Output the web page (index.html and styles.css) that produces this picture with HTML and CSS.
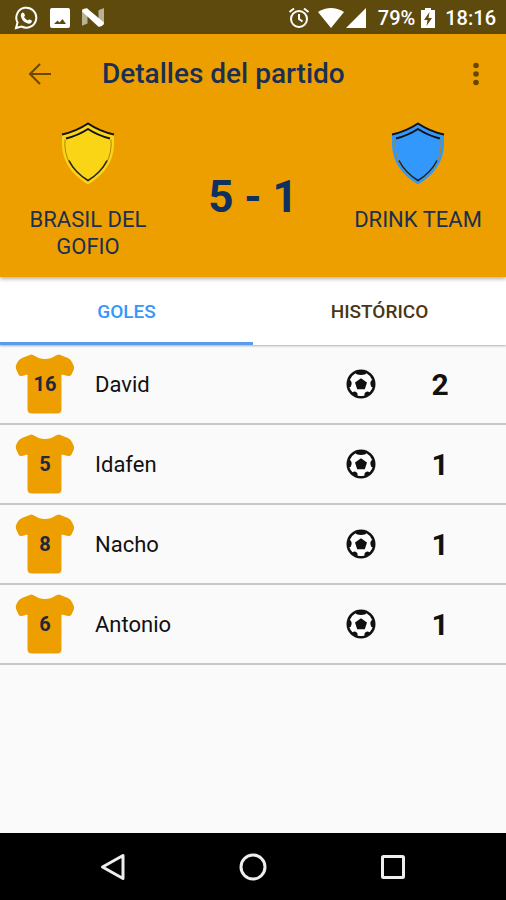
FILE: index.html
```html
<!DOCTYPE html>
<html lang="es">
<head>
<meta charset="utf-8">
<meta name="viewport" content="width=device-width, initial-scale=1">
<title>Detalles del partido</title>
<link rel="stylesheet" href="styles.css">
</head>
<body>
<svg class="defs" aria-hidden="true">
  <symbol id="shirt" viewBox="0 0 60 60">
    <path d="M16 .5 Q18 .5 20 2 Q24 5 30 5 Q36 5 40 2 Q42 .5 44 .5 L53 4 Q56 5.500 57.500 9 Q59.500 13 59 15 L56.500 20.500 Q55.500 22.500 53 22 L46.500 20.500 V55 Q46.500 59.500 42 59.500 H17 Q12.500 59.500 12.500 55 V20.500 L7 22 Q4.500 22.500 3.500 20.500 L1 15 Q0 12 2 9 Q3.500 5.500 7 4 Z"/>
  </symbol>
  <symbol id="ball" viewBox="0 0 30 30">
    <circle cx="15" cy="15" r="14.500"/>
    <path class="ball-white" d="M9.500 4.300 Q10.500 6 15 6 Q19.500 6 20.500 4.300 Q24.500 6.500 26.200 11 Q23.800 12.500 24.500 15.500 Q25 18.500 26.700 18.300 Q25.500 21.500 23.500 23.200 Q21.500 21.800 19.800 23 Q17.800 24.300 18.500 26.500 Q15 27.500 11.500 26.500 Q12.200 24.300 10.200 23 Q8.500 21.800 6.500 23.200 Q4.500 21.500 3.300 18.300 Q5 18.500 5.500 15.500 Q6.200 12.500 3.800 11 Q5.500 6.500 9.500 4.300 Z"/>
    <path d="M15 9.300 L21 13.500 L18.800 20.300 H11.200 L9 13.500 Z"/>
  </symbol>
  <symbol id="shield" viewBox="0 0 54 62">
    <path d="M27 1 Q15 9 1 12 V23 Q2 47 27 62 Q52 47 53 23 V12 Q39 9 27 1 Z"/>
    <path class="shield-side" d="M4 17 Q2 44 27 58 Q52 44 50 17"/>
    <path class="shield-tip" d="M8 38 Q14 50 27 58 Q40 50 46 38"/>
    <path class="shield-edge" d="M1 12 Q15 9 27 1 Q39 9 53 12 M5 16 Q17 13 27 6.500 Q37 13 49 16"/>
  </symbol>
</svg>

<div class="screen">
  <div class="status">
    <div class="status-group">
      <svg class="i24" viewBox="0 0 24 24"><path class="line" d="M2 22 L3.500 16.500 A10 10 0 1 1 7.500 20.500 Z"/><path class="fill" d="M8.500 6.500 L10 7 L11 9.500 L10 11 Q11.500 13.500 14 14.500 L15.300 13.300 L18 14.700 Q17.500 18 14.500 17.700 Q7.500 16 6.800 9.500 Q7 7 8.500 6.500 Z"/></svg>
      <svg class="i20" viewBox="0 0 20 20"><path class="fill" fill-rule="evenodd" d="M2 0 H18 Q20 0 20 2 V18 Q20 20 18 20 H2 Q0 20 0 18 V2 Q0 0 2 0 Z M4 16 H16 L12.500 11 L9.500 14.500 L7.500 12.500 Z"/></svg>
      <svg class="i22" viewBox="0 0 20 20"><path class="faint" d="M0 2 L5 1 V15 L0 17 Z M15 3 L20 1 V16 L15 18 Z"/><path class="fill" d="M0 4 Q1 1 5 1.500 L20 14 Q19 18 15 18 Z"/></svg>
    </div>
    <div class="status-group status-right">
      <svg class="i22" viewBox="0 0 22 22"><circle class="line" cx="11" cy="12" r="8"/><path class="line" d="M1.500 5 L6 1.500 M20.500 5 L16 1.500 M11 7 V12 L14.500 14.500"/></svg>
      <svg class="wifi" viewBox="0 0 26 20"><path class="fill" d="M0 4 Q13 -4 26 4 L13 20 Z"/></svg>
      <svg class="i20" viewBox="0 0 20 20"><path class="fill" d="M20 0 V20 H0 Z"/></svg>
      <span class="percent">79%</span>
      <svg class="battery" viewBox="0 0 14 20"><path class="fill" fill-rule="evenodd" d="M4 0 H10 V2 H14 V20 H0 V2 H4 Z M8.500 4 L3 12 H6.500 L5.500 18 L11 10 H7.500 Z"/></svg>
      <time>18:16</time>
    </div>
  </div>

  <header class="header">
    <div class="appbar">
      <button class="icon-btn" aria-label="Atrás"><svg class="i24" viewBox="0 0 24 24"><path class="arrow" d="M23 12 H2 M12 2 L2 12 L12 22"/></svg></button>
      <h1>Detalles del partido</h1>
      <button class="icon-btn" aria-label="Más opciones"><svg class="i24 dots" viewBox="0 0 24 24"><circle cx="12" cy="3.500" r="2.800"/><circle cx="12" cy="12" r="2.800"/><circle cx="12" cy="20.500" r="2.800"/></svg></button>
    </div>
    <div class="match">
      <div class="team"><svg class="shield yellow"><use href="#shield"/></svg><span>BRASIL DEL GOFIO</span></div>
      <div class="score">5 - 1</div>
      <div class="team"><svg class="shield blue"><use href="#shield"/></svg><span>DRINK TEAM</span></div>
    </div>
  </header>

  <div class="tabs" role="tablist">
    <button class="tab active" role="tab" aria-selected="true">GOLES</button>
    <button class="tab" role="tab" aria-selected="false">HISTÓRICO</button>
  </div>

  <main>
    <ul class="scorers">
      <li><div class="jersey"><svg><use href="#shirt"/></svg><b>16</b></div><span class="name">David</span><svg class="ball"><use href="#ball"/></svg><strong>2</strong></li>
      <li><div class="jersey"><svg><use href="#shirt"/></svg><b>5</b></div><span class="name">Idafen</span><svg class="ball"><use href="#ball"/></svg><strong>1</strong></li>
      <li><div class="jersey"><svg><use href="#shirt"/></svg><b>8</b></div><span class="name">Nacho</span><svg class="ball"><use href="#ball"/></svg><strong>1</strong></li>
      <li><div class="jersey"><svg><use href="#shirt"/></svg><b>6</b></div><span class="name">Antonio</span><svg class="ball"><use href="#ball"/></svg><strong>1</strong></li>
    </ul>
  </main>

  <nav class="navbar">
    <button aria-label="Volver"><svg class="i28" viewBox="0 0 28 28"><path d="M24 2.500 V25.500 L3.500 14 Z"/></svg></button>
    <button aria-label="Inicio"><svg class="i28" viewBox="0 0 28 28"><circle cx="14" cy="14" r="12"/></svg></button>
    <button aria-label="Recientes"><svg class="i28" viewBox="0 0 28 28"><rect x="3.500" y="3.500" width="21" height="21" rx="1"/></svg></button>
  </nav>
</div>
</body>
</html>
```
FILE: styles.css
```css
* { box-sizing: border-box; }
body { margin: 0; font-family: Roboto, "Liberation Sans", sans-serif; background: #fafafa; color: #111; }
button { border: 0; padding: 0; background: none; font: inherit; color: inherit; }
svg { display: block; flex: none; }
.defs { position: absolute; width: 0; height: 0; }
.screen { min-height: 100vh; display: flex; flex-direction: column; }

.i20 { width: 20px; height: 20px; }
.i22 { width: 22px; height: 22px; }
.i24 { width: 24px; height: 24px; }
.i28 { width: 28px; height: 28px; }

.status { height: 34px; padding: 2px 10px 0 14px; display: flex; align-items: center; justify-content: space-between; background: #5f4a0e; color: #fff; font-size: 20px; font-weight: 500; }
.status-group { display: flex; align-items: center; gap: 12px; }
.status-right { gap: 8px; }
.status .fill { fill: #fff; }
.status .faint { fill: #b9b096; }
.status .line { fill: none; stroke: #fff; stroke-width: 2; }
.status .wifi { width: 26px; height: 20px; margin-right: -6px; }
.battery { width: 14px; height: 20px; margin-left: -2px; }
.percent { margin-left: 4px; }
.status time { margin-left: 2px; }

.header { background: #ee9f00; color: #1b2f52; box-shadow: 0 2px 4px rgba(0, 0, 0, .3); position: relative; }
.appbar { height: 80px; padding: 0 18px; display: flex; align-items: center; }
.icon-btn { width: 24px; height: 48px; margin: 0 10px; display: flex; align-items: center; justify-content: center; }
.appbar .icon-btn:last-child { margin: 0; }
.arrow { fill: none; stroke: #674800; stroke-width: 2; }
.dots { fill: #674800; }
h1 { flex: 1; margin: 0 0 0 40px; font-size: 28px; line-height: 32px; font-weight: 500; }
.match { display: grid; grid-template-columns: 176px 1fr 176px; padding: 8px 0 17px; }
.team { display: flex; flex-direction: column; align-items: center; gap: 21px; padding: 0 16px; text-align: center; font-size: 22px; line-height: 27px; }
.shield { width: 54px; height: 63px; }
.yellow { fill: #fad516; }
.blue { fill: #3398fc; }
.shield-side { fill: none; stroke: #b78312; stroke-width: 1; }
.shield-tip { fill: none; stroke: #222; stroke-width: 1.500; }
.shield-edge { fill: none; stroke: #111; stroke-width: 2; }
.score { align-self: center; text-align: center; font-size: 44px; line-height: 52px; font-weight: 700; color: #10315f; padding-top: 12px; }

.tabs { display: flex; height: 68px; background: #fff; box-shadow: 0 1px 2px rgba(0, 0, 0, .3); }
.tab { flex: 1; padding-top: 4px; border-bottom: 3px solid transparent; font-size: 19px; font-weight: 500; color: #4a3711; }
.tab.active { color: #3398fc; border-color: #5b9bec; }

main { flex: 1; }
.scorers { list-style: none; margin: 0; padding: 0; }
.scorers li { height: 80px; padding: 0 50px 0 15px; display: flex; align-items: center; border-bottom: 2px solid #c8c8c8; }
.jersey { display: grid; place-items: center; width: 60px; height: 60px; }
.jersey > * { grid-area: 1 / 1; }
.jersey svg { width: 60px; height: 60px; fill: #ee9f00; }
.jersey b { font-size: 20px; color: #20283c; }
.name { flex: 1; margin-left: 20px; font-size: 22px; line-height: 28px; padding-top: 2px; }
.ball { width: 30px; height: 30px; fill: #111; }
.ball-white { fill: #fff; }
.scorers strong { width: 32px; margin-left: 48px; text-align: center; font-size: 30px; }

.navbar { height: 67px; padding: 0 43px; display: grid; grid-template-columns: repeat(3, 1fr); background: #000; }
.navbar button { display: grid; place-items: center; }
.navbar svg { fill: none; stroke: #eee; stroke-width: 3; stroke-linejoin: round; }
```
